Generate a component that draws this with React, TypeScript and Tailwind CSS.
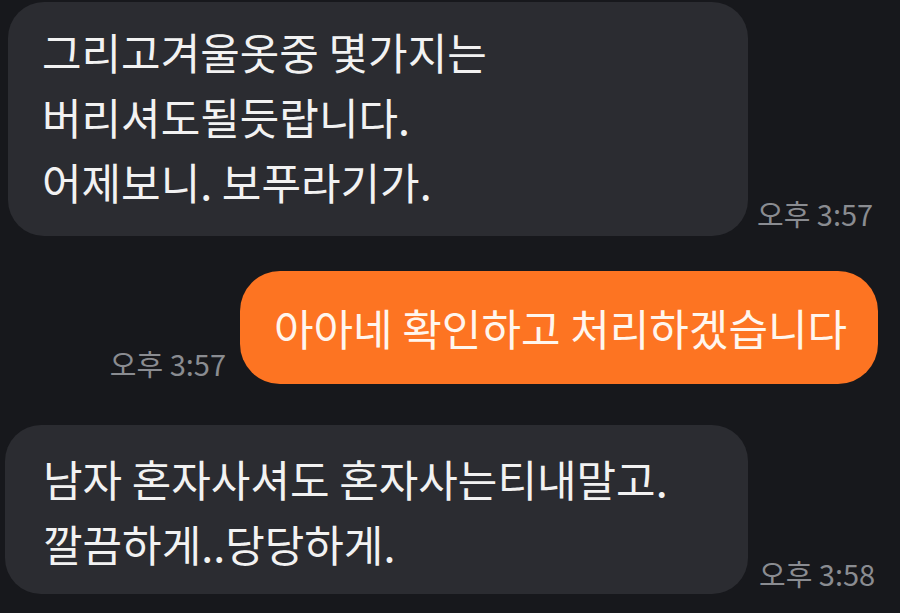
import React from "react";

const font = { fontFamily: '"Noto Sans CJK KR", "Noto Sans", sans-serif' };

export default function App() {
  return (
    <div
      className="w-[900px] h-[613px] overflow-hidden bg-[#17181c] flex flex-col"
      style={font}
    >
      <div className="flex items-end pl-[8px] pt-[2px]">
        <div className="w-[740px] rounded-[36px] bg-[#2b2c31] pl-[34px] pt-[17px] pb-[22px] text-[43px] leading-[65px] text-[#f2f2f2]">
          <div>그리고겨울옷중 몇가지는</div>
          <div>버리셔도될듯랍니다.</div>
          <div>어제보니. 보푸라기가.</div>
        </div>
        <div className="ml-[9px] mb-[6px] text-[29px] leading-[34px] text-[#8a8c91]">
          오후 3:57
        </div>
      </div>

      <div className="flex items-end justify-end pr-[22px] mt-[35px]">
        <div className="mr-[14px] mb-[4px] text-[29px] leading-[34px] text-[#8a8c91]">
          오후 3:57
        </div>
        <div className="w-[638px] rounded-[40px] bg-[#fd7422] pl-[34px] pt-[24px] pb-[24px] text-[43px] leading-[65px] text-[#fff6ee]">
          아아네 확인하고 처리하겠습니다
        </div>
      </div>

      <div className="flex items-end pl-[5px] mt-[41px]">
        <div className="w-[743px] rounded-[36px] bg-[#2b2c31] pl-[38px] pt-[21px] pb-[18px] text-[43px] leading-[65px] text-[#f2f2f2]">
          <div>남자 혼자사셔도 혼자사는티내말고.</div>
          <div>깔끔하게..당당하게.</div>
        </div>
        <div className="ml-[11px] mb-[4px] text-[29px] leading-[34px] text-[#8a8c91]">
          오후 3:58
        </div>
      </div>
    </div>
  );
}
